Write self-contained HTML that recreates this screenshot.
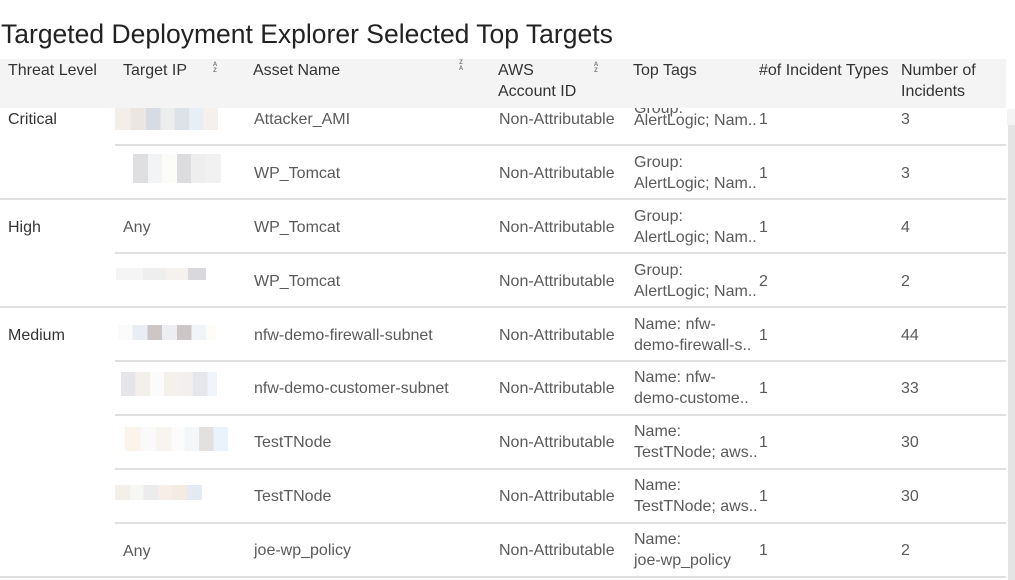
<!DOCTYPE html>
<html><head><meta charset="utf-8"><style>
body{margin:0;width:1015px;height:580px;overflow:hidden;background:#fff;font-family:"Liberation Sans",sans-serif;position:relative}
.a{position:absolute;white-space:nowrap}
.t{font-size:16px;line-height:20px;color:#5a5a5a;margin-top:2px}
.h{font-size:16px;line-height:21px;color:#333;margin-top:1px}
.ln{position:absolute;height:2px;background:#e0e0e0;right:9px}
.b{position:absolute;height:11px}
.s{position:absolute;font-size:6px;line-height:6px;color:#777;font-weight:bold;text-align:center;width:6px}
</style></head><body>
<div class="a" style="left:1px;top:18px;font-size:26.5px;line-height:32px;color:#222">Targeted Deployment Explorer Selected Top Targets</div>

<div class="a t" style="left:634px;top:97px">Group:</div>

<div class="a" style="left:0;top:59px;width:1006px;height:49px;background:#f4f4f4"></div>
<div class="a h" style="left:8px;top:59px">Threat Level</div>
<div class="a h" style="left:123px;top:59px">Target IP</div>
<div class="s" style="left:212px;top:62px">A<br>Z</div>
<div class="a h" style="left:253px;top:59px">Asset Name</div>
<div class="s" style="left:458px;top:60px">Z<br>A</div>
<div class="a h" style="left:498px;top:59px">AWS<br>Account ID</div>
<div class="s" style="left:593px;top:62px">A<br>Z</div>
<div class="a h" style="left:633px;top:59px">Top Tags</div>
<div class="a h" style="left:759px;top:59px">#of Incident Types</div>
<div class="a h" style="left:901px;top:59px">Number of<br>Incidents</div>

<div class="a" style="left:1007px;top:109px;width:8px;height:16px;background:#f4f4f4"></div>
<div class="a" style="left:1008px;top:125px;width:7px;height:455px;background:#e4e4e4"></div>

<div class="ln" style="left:115px;top:144px"></div>
<div class="ln" style="left:0;top:198px"></div>
<div class="ln" style="left:115px;top:252px"></div>
<div class="ln" style="left:0;top:306px"></div>
<div class="ln" style="left:115px;top:360px"></div>
<div class="ln" style="left:115px;top:414px"></div>
<div class="ln" style="left:115px;top:468px"></div>
<div class="ln" style="left:115px;top:522px"></div>
<div class="ln" style="left:0;top:576px"></div>

<div class="a t" style="left:8px;top:108px;color:#333">Critical</div>
<div class="a t" style="left:8px;top:216px;color:#333">High</div>
<div class="a t" style="left:8px;top:324px;color:#333">Medium</div>

<div class="b" style="left:115px;top:108px;width:103px;height:22px;background:linear-gradient(90deg,#f3eee9 0 15%,#ece6e2 15% 30%,#d8dce2 30% 44%,#eceeee 44% 58%,#dde1e8 58% 72%,#e8eef5 72% 86%,#f6f0ec 86%)"></div>
<div class="b" style="left:133px;top:154px;width:88px;height:29px;background:linear-gradient(90deg,#dfdfe2 0 17%,#f2f4f6 17% 33%,#fcfcf8 33% 50%,#dcdcde 50% 66%,#eeeeee 66% 83%,#f1f1f1 83%)"></div>
<div class="a t" style="left:123px;top:216px">Any</div>
<div class="b" style="left:116px;top:268px;width:90px;height:12px;background:linear-gradient(90deg,#f5f5f5 0 30%,#eeeeee 30% 55%,#f4f1ef 55% 80%,#d9d8dc 80%)"></div>
<div class="b" style="left:118px;top:325px;width:98px;height:15px;background:linear-gradient(90deg,#fbfbfb 0 15%,#e9eef5 15% 30%,#cdc6c6 30% 45%,#eceef2 45% 60%,#cdc6c6 60% 75%,#f2f5f8 75% 90%,#fdfcf6 90%)"></div>
<div class="b" style="left:121px;top:372px;width:96px;height:24px;background:linear-gradient(90deg,#e6e6ea 0 15%,#f3efea 15% 30%,#fbfbfb 30% 45%,#f4f0ec 45% 60%,#f2efee 60% 75%,#e5e7ec 75% 90%,#f1f5fa 90%)"></div>
<div class="b" style="left:125px;top:427px;width:103px;height:24px;background:linear-gradient(90deg,#fbf4ec 0 15%,#fafafa 15% 30%,#f8f5f1 30% 45%,#fcfcfc 45% 58%,#f4f7fa 58% 72%,#e5e0e0 72% 86%,#eaf2fb 86%)"></div>
<div class="b" style="left:115px;top:485px;width:87px;height:15px;background:linear-gradient(90deg,#f5efe9 0 17%,#f7f7f5 17% 33%,#ececec 33% 50%,#f6eee7 50% 66%,#f4ebe2 66% 83%,#e3eaf2 83%)"></div>
<div class="a t" style="left:123px;top:540px">Any</div>

<div class="a t" style="left:254px;top:108px">Attacker_AMI</div>
<div class="a t" style="left:254px;top:162px">WP_Tomcat</div>
<div class="a t" style="left:254px;top:216px">WP_Tomcat</div>
<div class="a t" style="left:254px;top:270px">WP_Tomcat</div>
<div class="a t" style="left:254px;top:324px">nfw-demo-firewall-subnet</div>
<div class="a t" style="left:254px;top:377px">nfw-demo-customer-subnet</div>
<div class="a t" style="left:254px;top:431px">TestTNode</div>
<div class="a t" style="left:254px;top:485px">TestTNode</div>
<div class="a t" style="left:254px;top:539px">joe-wp_policy</div>

<div class="a t" style="left:499px;top:108px">Non-Attributable</div>
<div class="a t" style="left:499px;top:162px">Non-Attributable</div>
<div class="a t" style="left:499px;top:216px">Non-Attributable</div>
<div class="a t" style="left:499px;top:270px">Non-Attributable</div>
<div class="a t" style="left:499px;top:324px">Non-Attributable</div>
<div class="a t" style="left:499px;top:377px">Non-Attributable</div>
<div class="a t" style="left:499px;top:431px">Non-Attributable</div>
<div class="a t" style="left:499px;top:485px">Non-Attributable</div>
<div class="a t" style="left:499px;top:539px">Non-Attributable</div>

<div class="a t" style="left:634px;top:108px;line-height:21px">AlertLogic; Nam..</div>
<div class="a t" style="left:634px;top:150px;line-height:21px">Group:<br>AlertLogic; Nam..</div>
<div class="a t" style="left:634px;top:204px;line-height:21px">Group:<br>AlertLogic; Nam..</div>
<div class="a t" style="left:634px;top:258px;line-height:21px">Group:<br>AlertLogic; Nam..</div>
<div class="a t" style="left:634px;top:312px;line-height:21px">Name: nfw-<br>demo-firewall-s..</div>
<div class="a t" style="left:634px;top:365px;line-height:21px">Name: nfw-<br>demo-custome..</div>
<div class="a t" style="left:634px;top:419px;line-height:21px">Name:<br>TestTNode; aws..</div>
<div class="a t" style="left:634px;top:473px;line-height:21px">Name:<br>TestTNode; aws..</div>
<div class="a t" style="left:634px;top:527px;line-height:21px">Name:<br>joe-wp_policy</div>

<div class="a t" style="left:759px;top:108px">1</div>
<div class="a t" style="left:759px;top:162px">1</div>
<div class="a t" style="left:759px;top:216px">1</div>
<div class="a t" style="left:759px;top:270px">2</div>
<div class="a t" style="left:759px;top:324px">1</div>
<div class="a t" style="left:759px;top:377px">1</div>
<div class="a t" style="left:759px;top:431px">1</div>
<div class="a t" style="left:759px;top:485px">1</div>
<div class="a t" style="left:759px;top:539px">1</div>

<div class="a t" style="left:901px;top:108px">3</div>
<div class="a t" style="left:901px;top:162px">3</div>
<div class="a t" style="left:901px;top:216px">4</div>
<div class="a t" style="left:901px;top:270px">2</div>
<div class="a t" style="left:901px;top:324px">44</div>
<div class="a t" style="left:901px;top:377px">33</div>
<div class="a t" style="left:901px;top:431px">30</div>
<div class="a t" style="left:901px;top:485px">30</div>
<div class="a t" style="left:901px;top:539px">2</div>
</body></html>
